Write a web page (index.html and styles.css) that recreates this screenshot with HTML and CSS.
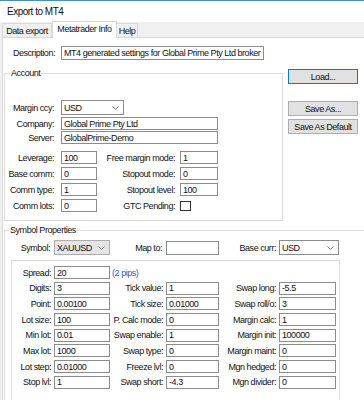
FILE: index.html
```html
<!DOCTYPE html>
<html lang="en">
<head>
    <meta charset="UTF-8">
    <meta name="viewport" content="width=device-width, initial-scale=1.0">
    <title>Export to MT4</title>
    <link rel="stylesheet" href="styles.css">
</head>
<body>

    <div class="window">
        <div class="titlebar">Export to MT4</div>

        <div class="tabs">
            <div class="tab tab-data">Data export</div>
            <div class="tab tab-info active">Metatrader Info</div>
            <div class="tab tab-help">Help</div>
        </div>

        <div class="page">
            <div class="desc-row">
                <label class="desc-lbl" for="description">Description:</label>
                <input type="text" id="description" class="desc-input" value="MT4 generated settings for Global Prime Pty Ltd broker">
            </div>

            <div class="middle">
                <fieldset class="group account">
                    <legend>Account</legend>

                    <div class="acc-row row-ccy">
                        <label class="lbl-a">Margin ccy:</label>
                        <div class="combo combo-ccy">
                            <span>USD</span>
                            <svg width="7" height="4" viewBox="0 0 7 4"><path d="M0.5 0.5 L3.5 3.3 L6.5 0.5" fill="none" stroke="#6a6a6a" stroke-width="0.9"/></svg>
                        </div>
                    </div>
                    <div class="acc-row row-company">
                        <label class="lbl-a">Company:</label>
                        <input type="text" class="in-wide" value="Global Prime Pty Ltd">
                    </div>
                    <div class="acc-row row-server">
                        <label class="lbl-a">Server:</label>
                        <input type="text" class="in-wide" value="GlobalPrime-Demo">
                    </div>
                    <div class="acc-row row-first">
                        <label class="lbl-a">Leverage:</label>
                        <input type="text" class="in-s" value="100">
                        <label class="lbl-b">Free margin mode:</label>
                        <input type="text" class="in-r" value="1">
                    </div>
                    <div class="acc-row">
                        <label class="lbl-a">Base comm:</label>
                        <input type="text" class="in-s" value="0">
                        <label class="lbl-b">Stopout mode:</label>
                        <input type="text" class="in-r" value="0">
                    </div>
                    <div class="acc-row">
                        <label class="lbl-a">Comm type:</label>
                        <input type="text" class="in-s" value="1">
                        <label class="lbl-b">Stopout level:</label>
                        <input type="text" class="in-r" value="100">
                    </div>
                    <div class="acc-row">
                        <label class="lbl-a">Comm lots:</label>
                        <input type="text" class="in-s" value="0">
                        <label class="lbl-b">GTC Pending:</label>
                        <span class="check"></span>
                    </div>
                </fieldset>

                <div class="buttons">
                    <button type="button" class="btn btn-load">Load...</button>
                    <button type="button" class="btn btn-save">Save As...</button>
                    <button type="button" class="btn btn-default">Save As Default</button>
                </div>
            </div>

            <fieldset class="group symbol">
                <legend>Symbol Properties</legend>

                <div class="sym-row">
                    <label class="sym-lbl1">Symbol:</label>
                    <div class="combo combo-symbol">
                        <span>XAUUSD</span>
                        <svg width="7" height="4" viewBox="0 0 7 4"><path d="M0.5 0.5 L3.5 3.3 L6.5 0.5" fill="none" stroke="#6a6a6a" stroke-width="0.9"/></svg>
                    </div>
                    <label class="sym-lbl2">Map to:</label>
                    <input type="text" class="in-map" value="">
                    <label class="sym-lbl3">Base curr:</label>
                    <div class="combo combo-base">
                        <span>USD</span>
                        <svg width="7" height="4" viewBox="0 0 7 4"><path d="M0.5 0.5 L3.5 3.3 L6.5 0.5" fill="none" stroke="#6a6a6a" stroke-width="0.9"/></svg>
                    </div>
                </div>

                <div class="props">
                    <label class="p-lbl">Spread:</label>
                    <input type="text" value="20">
                    <span class="pips">(2 pips)</span>

                    <label class="p-lbl">Digits:</label>
                    <input type="text" value="3">
                    <label class="p-lbl">Tick value:</label>
                    <input type="text" value="1">
                    <label class="p-lbl">Swap long:</label>
                    <input type="text" value="-5.5">

                    <label class="p-lbl">Point:</label>
                    <input type="text" value="0.00100">
                    <label class="p-lbl">Tick size:</label>
                    <input type="text" value="0.01000">
                    <label class="p-lbl">Swap roll/o:</label>
                    <input type="text" value="3">

                    <label class="p-lbl">Lot size:</label>
                    <input type="text" value="100">
                    <label class="p-lbl">P. Calc mode:</label>
                    <input type="text" value="0">
                    <label class="p-lbl">Margin calc:</label>
                    <input type="text" value="1">

                    <label class="p-lbl">Min lot:</label>
                    <input type="text" value="0.01">
                    <label class="p-lbl">Swap enable:</label>
                    <input type="text" value="1">
                    <label class="p-lbl">Margin init:</label>
                    <input type="text" value="100000">

                    <label class="p-lbl">Max lot:</label>
                    <input type="text" value="1000">
                    <label class="p-lbl">Swap type:</label>
                    <input type="text" value="0">
                    <label class="p-lbl">Margin maint:</label>
                    <input type="text" value="0">

                    <label class="p-lbl">Lot step:</label>
                    <input type="text" value="0.01000">
                    <label class="p-lbl">Freeze lvl:</label>
                    <input type="text" value="0">
                    <label class="p-lbl">Mgn hedged:</label>
                    <input type="text" value="0">

                    <label class="p-lbl">Stop lvl:</label>
                    <input type="text" value="1">
                    <label class="p-lbl">Swap short:</label>
                    <input type="text" value="-4.3">
                    <label class="p-lbl">Mgn divider:</label>
                    <input type="text" value="0">
                </div>
            </fieldset>
        </div>
    </div>

</body>
</html>
```

FILE: styles.css
```css
body {
    margin: 0;
    background-color: #f0f0f0;
    font-family: "Liberation Sans", Arial, sans-serif;
    font-size: 9px;
    letter-spacing: -0.45px;
    color: #111;
}
.window {
    width: 364px;
    height: 400px;
    overflow: hidden;
    white-space: nowrap;
}
.titlebar {
    height: 21px;
    border-top: 1px solid #3f8fcf;
    background-color: #fff;
    padding-left: 7px;
    line-height: 22px;
    font-size: 10px;
    letter-spacing: -0.5px;
}

/* tab strip */
.tabs {
    display: flex;
    align-items: flex-end;
    height: 15px;
    margin-left: 2px;
}
.tab {
    box-sizing: border-box;
    height: 14px;
    border: 1px solid #d9d9d9;
    border-bottom: none;
    background-color: #f0f0f0;
    text-align: center;
    line-height: 14px;
}
.tab-data {
    width: 50px;
}
.tab-info {
    width: 65px;
}
.tab-help {
    width: 21px;
    border-left: none;
}
.tab.active {
    position: relative;
    z-index: 1;
    height: 17px;
    margin-bottom: -1px;
    background-color: #fff;
    line-height: 15px;
}

.page {
    margin-left: 2px;
    height: 400px;
    border-top: 1px solid #d9d9d9;
    border-left: 1px solid #d9d9d9;
    background-color: #fff;
}

input {
    box-sizing: border-box;
    height: 13px;
    margin: 0;
    padding: 0 2px;
    border: 1px solid #8c8c8c;
    background-color: #fff;
    font: inherit;
    letter-spacing: inherit;
    color: inherit;
    outline: none;
}

.desc-row {
    display: flex;
    align-items: center;
    margin-top: 8px;
}
.desc-lbl {
    box-sizing: border-box;
    width: 58px;
    padding-right: 6px;
    text-align: right;
}
.desc-input {
    width: 203px;
    height: 14px;
}

.middle {
    display: flex;
    align-items: flex-start;
    margin-top: 7px;
}

/* group boxes */
.group {
    box-sizing: border-box;
    margin: 0;
    padding: 0;
    border: 1px solid #dcdcdc;
    min-width: 0;
}
.group legend {
    margin-left: 5px;
    padding: 0 1px;
    line-height: 12px;
}
.account {
    width: 279px;
    margin-left: 1px;
    padding-bottom: 8px;
}
.acc-row {
    display: flex;
    align-items: center;
    height: 13px;
    margin-top: 3px;
}
.acc-row.row-ccy {
    height: 15px;
    margin-top: 21px;
}
.acc-row.row-company {
    margin-top: 2px;
}
.acc-row.row-server {
    margin-top: 1px;
}
.acc-row.row-first {
    margin-top: 7px;
}
.lbl-a {
    box-sizing: border-box;
    width: 56px;
    padding-right: 7px;
    text-align: right;
}
.lbl-b {
    box-sizing: border-box;
    width: 83px;
    padding-right: 5px;
    text-align: right;
}
.in-s {
    width: 36px;
}
.in-r {
    width: 38px;
}
.in-wide {
    width: 157px;
}
.check {
    box-sizing: border-box;
    width: 11px;
    height: 10px;
    border: 1px solid #333;
    background-color: #fff;
}

.combo {
    box-sizing: border-box;
    display: flex;
    align-items: center;
    justify-content: space-between;
    height: 15px;
    padding: 0 4px 0 2px;
    border: 1px solid #8c8c8c;
    background-color: #fff;
}
.combo svg {
    display: block;
}
.combo-ccy {
    width: 63px;
}
.combo-symbol {
    width: 56px;
    border-color: #adadad;
    background-color: #e5e5e5;
}
.combo-base {
    width: 60px;
}

/* buttons */
.buttons {
    display: flex;
    flex-direction: column;
    width: 70px;
    margin-left: 5px;
}
.btn {
    box-sizing: border-box;
    height: 15px;
    padding: 0;
    border: 1px solid #adadad;
    background-color: #e1e1e1;
    font: inherit;
    letter-spacing: inherit;
    color: inherit;
}
.btn-load {
    margin-top: 2px;
    border-color: #0078d7;
}
.btn-save {
    margin-top: 17px;
}
.btn-default {
    margin-top: 3px;
}

/* symbol properties */
.symbol {
    width: 400px;
    margin: 3px 0 0 1px;
}
.symbol legend {
    margin-left: 4px;
}
.sym-row {
    display: flex;
    align-items: center;
    height: 15px;
    margin-top: 4px;
}
.sym-lbl1,
.sym-lbl2,
.sym-lbl3 {
    box-sizing: border-box;
    padding-right: 4px;
    text-align: right;
}
.sym-lbl1 {
    width: 49px;
}
.sym-lbl2 {
    width: 56px;
}
.sym-lbl3 {
    width: 60px;
    padding-right: 3px;
}
.in-map {
    width: 53px;
    height: 14px;
}

.props {
    box-sizing: border-box;
    display: grid;
    grid-template-columns: 42px 56px 56px 53px 60px 57px;
    grid-auto-rows: 13px;
    row-gap: 2.7px;
    align-items: center;
    width: 329px;
    margin: 5px 0 0 6px;
    padding: 5px 0 30px 0;
    border: 1px solid #dcdcdc;
}
.props input {
    width: 100%;
}
.p-lbl {
    padding-right: 3px;
    text-align: right;
}
.pips {
    grid-column: span 4;
    padding-left: 2px;
    color: #1a5fc4;
}
```
